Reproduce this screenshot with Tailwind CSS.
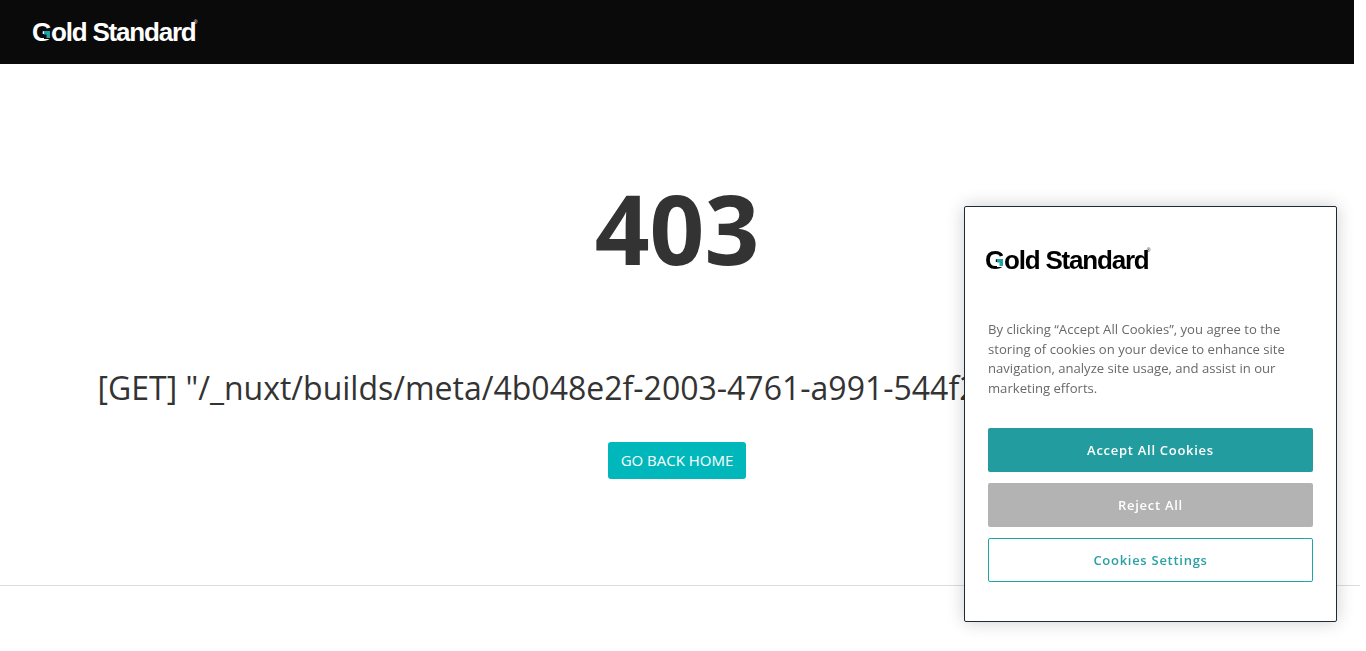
<!DOCTYPE html>
<html lang="en">
<head>
  <meta charset="UTF-8">
  <meta name="viewport" content="width=device-width, initial-scale=1.0">
  <title>403 - Gold Standard</title>
  <script src="https://cdn.jsdelivr.net/npm/@tailwindcss/browser@4"></script>
</head>
<body class="h-[651px] overflow-hidden bg-white font-['Open_Sans',sans-serif] text-[#333]">
  <div class="w-[1354px]">
    <header class="flex h-16 items-center bg-[#0a0a0a] pl-8">
      <a href="#" class="relative block font-['Liberation_Sans',sans-serif] text-[26px] leading-none font-bold tracking-[-1.2px] text-white">
        Gold Standard<sup class="absolute top-[3px] -right-[2px] text-[5px] font-normal tracking-normal">®</sup>
        <svg class="absolute top-[11px] left-[12px] h-[9px] w-[7px]" viewBox="0 0 7 9"><rect width="7" height="9" fill="#0a0a0a"/><path d="M0 1H6V8H2.5V4.5H0Z" fill="#1fa3a6"/></svg>
      </a>
    </header>

    <main class="flex h-[522px] w-[1360px] flex-col border-b border-[#ddd]">
      <div class="flex w-[1354px] flex-col items-center">
        <h1 class="mt-[98px] text-[96px] leading-[132px] font-bold">403</h1>
        <p class="mt-[70px] pl-[2px] text-[32px] leading-[48px] whitespace-nowrap">[GET] "/_nuxt/builds/meta/4b048e2f-2003-4761-a991-544f2c7d8e10.json": 403</p>
        <a href="#" class="mt-[30px] flex h-[37px] w-[138px] items-center justify-center rounded-[3px] bg-[#00b8bc] text-[15px] text-white">GO BACK HOME</a>
      </div>
    </main>
  </div>

  <div class="fixed top-[206px] left-[964px] h-[416px] w-[373px] rounded-[2px] border border-[#1f2a37] bg-white pt-[42px] pl-[20px] shadow-[0_0_18px_rgba(0,0,0,0.2)]">
    <div class="relative w-fit font-['Liberation_Sans',sans-serif] text-[26px] leading-[22px] font-bold tracking-[-1.2px] text-black">
      Gold Standard<sup class="absolute top-[1px] -right-[2px] text-[5px] font-normal tracking-normal">®</sup>
      <svg class="absolute top-[9px] left-[12px] h-[9px] w-[7px]" viewBox="0 0 7 9"><rect width="7" height="9" fill="#fff"/><path d="M0 1H6V8H2.5V4.5H0Z" fill="#1fa3a6"/></svg>
    </div>
    <div class="mt-[49px] ml-[3px] w-[325px]">
      <p class="text-[13.1px] leading-[19.6px] text-[#696969]">By clicking “Accept All Cookies”, you agree to the storing of cookies on your device to enhance site navigation, analyze site usage, and assist in our marketing efforts.</p>
      <div class="mt-[30px] flex flex-col gap-[11px] text-[13px] font-semibold tracking-[0.72px]">
        <button class="h-[44px] rounded-[2px] bg-[#229c9f] text-white">Accept All Cookies</button>
        <button class="h-[44px] rounded-[2px] bg-[#b3b3b3] text-white">Reject All</button>
        <button class="h-[44px] rounded-[2px] border border-[#1fa5a8] bg-white text-[#2aa1a4]">Cookies Settings</button>
      </div>
    </div>
  </div>
</body>
</html>
